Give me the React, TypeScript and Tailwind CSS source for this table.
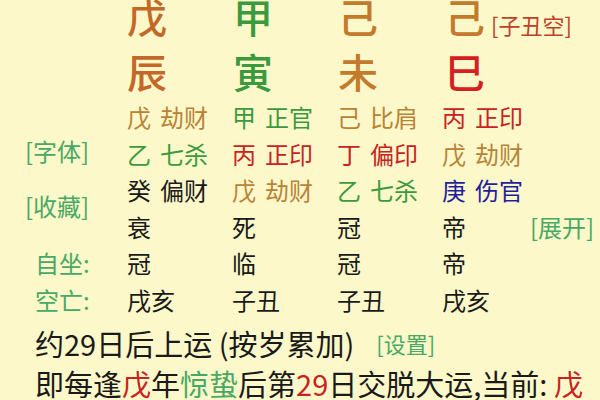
const ORANGE = "text-[#c4682a]";
const GOLD = "text-[#b98336]";
const GREEN = "text-[#3c9a3e]";
const RED = "text-[#c82222]";
const BLUE = "text-[#1f1f9e]";
const BLACK = "text-[#1a1a1a]";

type Cell = { stem: string; god: string; color: string };

const hidden: Cell[][] = [
  [
    { stem: "戊", god: "劫财", color: GOLD },
    { stem: "甲", god: "正官", color: GREEN },
    { stem: "己", god: "比肩", color: GOLD },
    { stem: "丙", god: "正印", color: RED },
  ],
  [
    { stem: "乙", god: "七杀", color: GREEN },
    { stem: "丙", god: "正印", color: RED },
    { stem: "丁", god: "偏印", color: RED },
    { stem: "戊", god: "劫财", color: GOLD },
  ],
  [
    { stem: "癸", god: "偏财", color: BLACK },
    { stem: "戊", god: "劫财", color: GOLD },
    { stem: "乙", god: "七杀", color: GREEN },
    { stem: "庚", god: "伤官", color: BLUE },
  ],
];

const plain = [
  ["衰", "死", "冠", "帝"],
  ["冠", "临", "冠", "帝"],
  ["戌亥", "子丑", "子丑", "戌亥"],
];

export default function App() {
  return (
    <div
      className="h-[400px] w-[600px] overflow-hidden bg-[#fcf8c9]"
      style={{ fontFamily: '"Noto Sans CJK SC", "Noto Sans", sans-serif' }}
    >
      {/* pillars */}
      <div className="mt-[-11px] grid grid-cols-[127px_106px_105px_107px_1fr] text-[40px] leading-[55px] font-medium">
        <div />
        <div className={ORANGE}>戊</div>
        <div className={GREEN}>甲</div>
        <div className="text-[#c47a2c]">己</div>
        <div className="flex items-end">
          <span className="text-[#c47a2c]">己</span>
          <span className="ml-[6px] mb-[6px] text-[22px] leading-[28px] font-normal text-[#c0402a]">[子丑空]</span>
        </div>
        <div />
        <div className={ORANGE}>辰</div>
        <div className={GREEN}>寅</div>
        <div className="text-[#c47a2c]">未</div>
        <div className="text-[#d42020]">巳</div>
      </div>

      <div className="grid grid-cols-[127px_105px_105px_105px_88px_1fr] text-[24px] leading-[36.5px]">
        <div className="row-span-4 flex flex-col items-start pl-[25px] pt-[34px] text-[#4aa866]">
          <span>[字体]</span>
          <span className="mt-[18px]">[收藏]</span>
        </div>
        {hidden.map((row, i) =>
          row.map((c, j) => (
            <div key={`${i}-${j}`} className={`${c.color} ${j === 3 ? "col-span-2" : ""} whitespace-nowrap`}>
              {c.stem}
              <span className="ml-[9px]">{c.god}</span>
            </div>
          ))
        )}
        {plain[0].map((t, j) => (
          <div key={`a${j}`} className={BLACK}>
            {t}
          </div>
        ))}
        <div className="text-[#4aa866]">[展开]</div>
        <div className="pl-[35px] text-[#4aa866]">自坐:</div>
        {plain[1].map((t, j) => (
          <div key={`b${j}`} className={`${BLACK} ${j === 3 ? "col-span-2" : ""}`}>
            {t}
          </div>
        ))}
        <div className="pl-[35px] text-[#4aa866]">空亡:</div>
        {plain[2].map((t, j) => (
          <div key={`c${j}`} className={`${BLACK} ${j === 3 ? "col-span-2" : ""}`}>
            {t}
          </div>
        ))}
      </div>

      <div className="mt-[5px] pl-[35px] text-[29px] leading-[40px] whitespace-nowrap text-[#1a1a1a]">
        <div className="flex items-center">
          <span>约29日后上运 (按岁累加)</span>
          <span className="ml-[22px] text-[22px] text-[#4aa866]">[设置]</span>
        </div>
        <div>
          即每逢<span className={RED}>戊</span>年<span className="text-[#4aa866]">惊蛰</span>后第
          <span className={RED}>29</span>日交脱大运,当前: <span className={RED}>戊</span>
        </div>
      </div>
    </div>
  );
}
